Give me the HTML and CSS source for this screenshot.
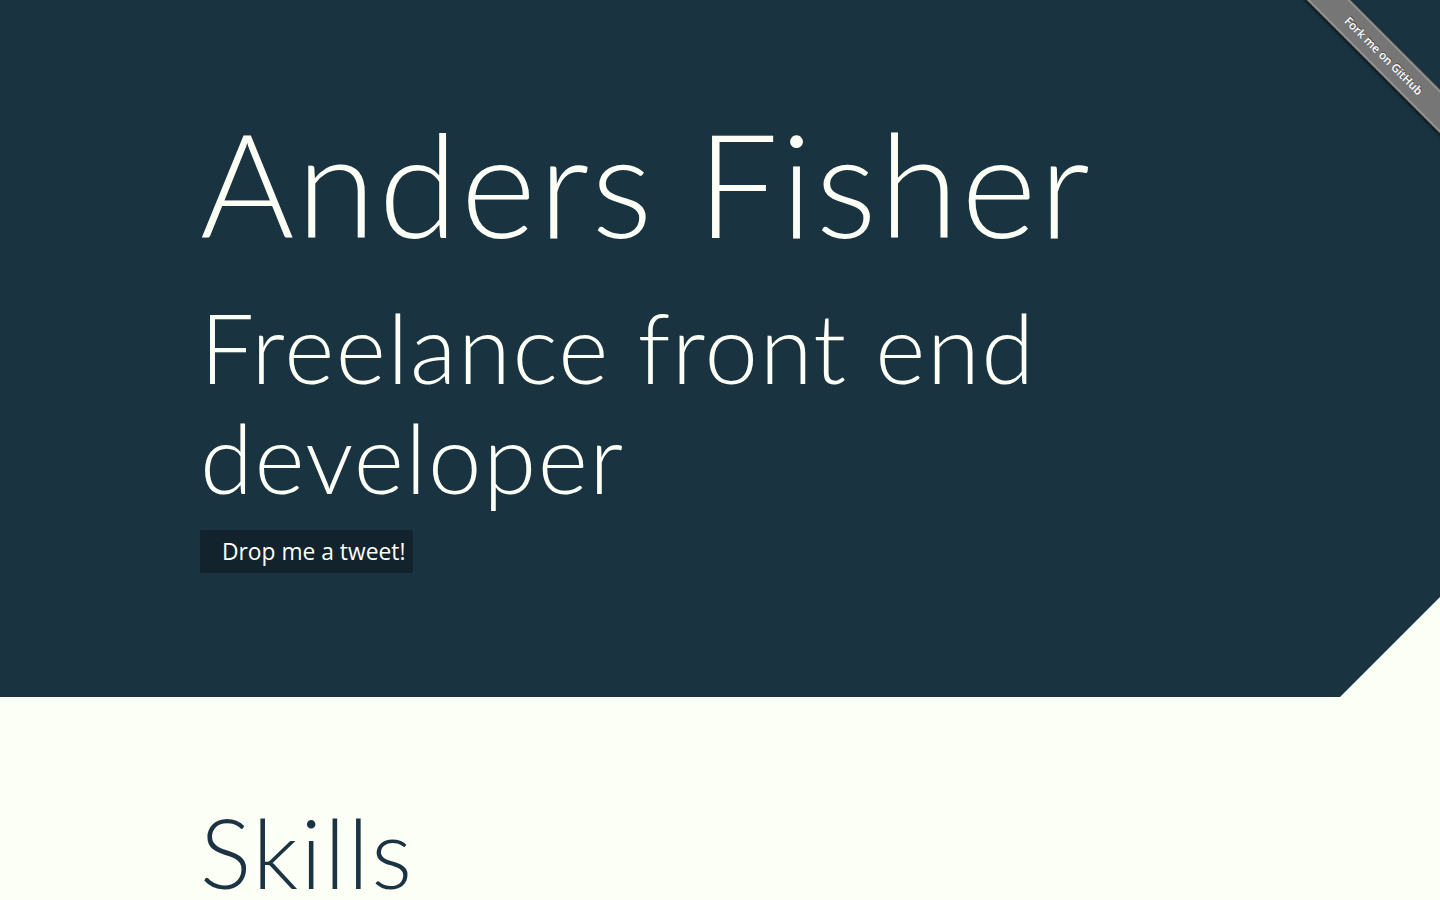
FILE: index.html
```html
<!DOCTYPE html>
<html lang="en">
<head>
<meta charset="utf-8">
<title>Anders Fisher</title>
<link rel="stylesheet" href="styles.css">
</head>
<body>
<header class="hero">
  <div class="wrap">
    <h1 class="name">Anders Fisher</h1>
    <h2 class="role">Freelance front end developer</h2>
    <a class="tweet" href="#">Drop me a tweet!</a>
  </div>
  <div class="ribbon-box">
    <a class="ribbon" href="#">Fork me on GitHub</a>
  </div>
</header>
<main class="content">
  <div class="wrap">
    <h2 class="section-title">Skills</h2>
  </div>
</main>
</body>
</html>
```
FILE: styles.css
```css
* { box-sizing: border-box; }
html, body { margin: 0; padding: 0; }
body {
  background: #fbfff5;
  color: #1b3342;
  font-family: Lato, "Open Sans", sans-serif;
  font-weight: 300;
  overflow: hidden;
  height: 900px;
}
.wrap { padding: 0 200px; }
.hero {
  position: relative;
  background: #1a3341;
  color: #fbfff5;
  height: 697px;
  clip-path: polygon(0 0, 100% 0, 100% 597px, 1340px 697px, 0 697px);
  padding-top: 100px;
}
.name {
  margin: 0;
  font-size: 144px;
  font-weight: 300;
  line-height: 166px;
  letter-spacing: 0.019em;
}
.role {
  margin: 26px 0 0;
  font-size: 96px;
  font-weight: 300;
  line-height: 110px;
  letter-spacing: 0.016em;
  max-width: 900px;
}
.tweet {
  display: inline-block;
  margin-top: 18px;
  background: #12232d;
  color: #fbfff5;
  text-decoration: none;
  font-family: "Open Sans", sans-serif;
  font-weight: 400;
  font-size: 22.8px;
  line-height: 43px;
  padding: 0 8px 0 22px;
  border-radius: 2px;
}
.ribbon-box {
  position: absolute;
  top: 0;
  right: 0;
  width: 150px;
  height: 150px;
  overflow: hidden;
}
.ribbon {
  position: absolute;
  left: -56px;
  top: 40px;
  width: 300px;
  height: 31px;
  transform: rotate(45deg);
  background: #767676;
  color: #fff;
  text-align: center;
  text-decoration: none;
  font-family: "Open Sans", sans-serif;
  font-weight: 600;
  font-size: 11.5px;
  line-height: 31px;
  text-shadow: 0 -1px 0 rgba(0,0,0,0.5);
  box-shadow: 0 2px 3px rgba(0,0,0,0.5);
}
.ribbon::before {
  content: "";
  position: absolute;
  left: 0; right: 0;
  top: 1px; bottom: 1px;
  border-top: 1px solid rgba(255,255,255,0.3);
  border-bottom: 1px solid rgba(255,255,255,0.3);
}
.content { padding-top: 100px; }
.section-title {
  margin: 0;
  font-size: 96px;
  font-weight: 300;
  line-height: 110px;
  letter-spacing: 0.024em;
  color: #1b3342;
}
```
